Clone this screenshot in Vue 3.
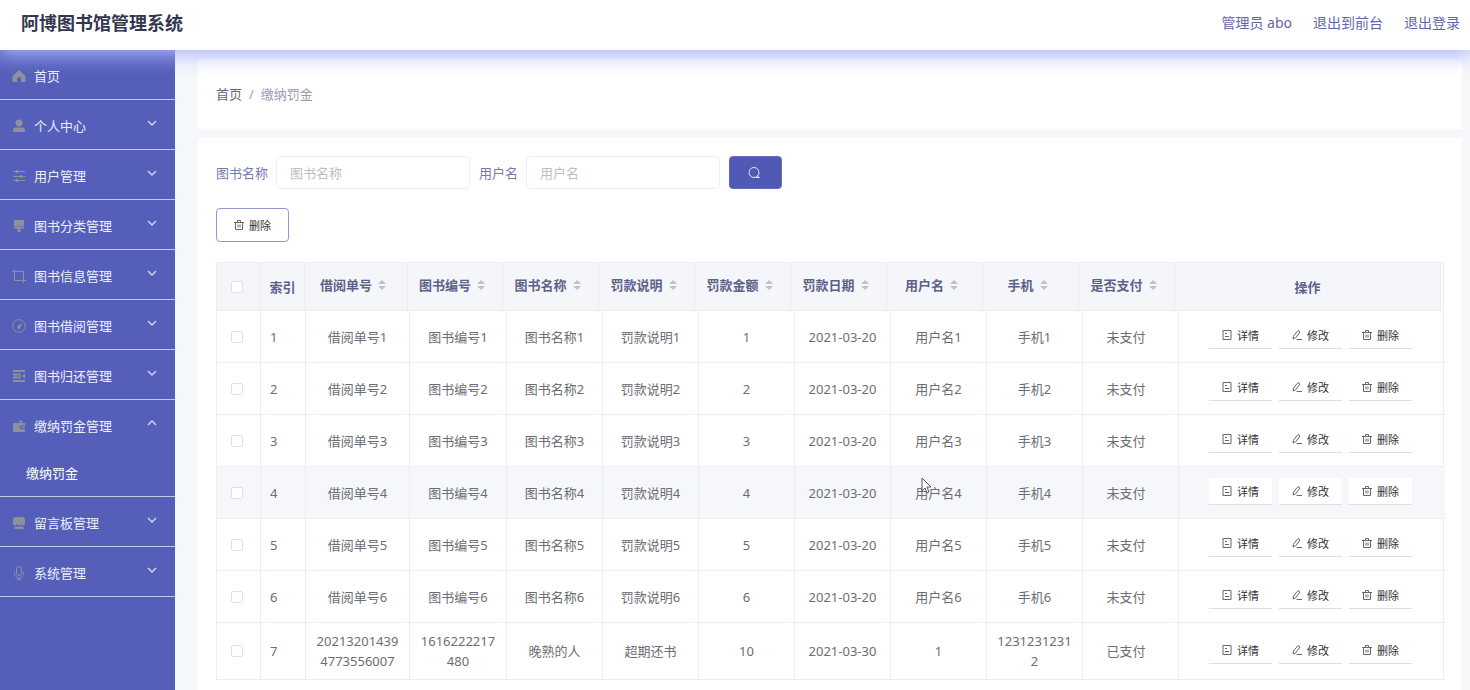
<template>
    <div class="layout">
        <header class="navbar">
            <h1 class="title">阿博图书馆管理系统</h1>
            <nav class="nav-links">
                <a href="#">管理员 abo</a>
                <a href="#">退出到前台</a>
                <a href="#">退出登录</a>
            </nav>
        </header>

        <div class="body">
            <aside class="sidebar">
                <ul class="menu">
                    <li v-for="item in menu" :key="item.label" class="menu-item">
                        <a href="#" class="menu-link">
                            <svg class="menu-icon" viewBox="0 0 14 14" v-html="menuIcons[item.icon]"></svg>
                            <span>{{ item.label }}</span>
                            <svg v-if="item.icon !== 'home'" class="arrow" :class="{ open: item.children }" viewBox="0 0 10 6">
                                <path d="M1 1l4 4 4-4" />
                            </svg>
                        </a>
                        <a v-for="child in item.children" :key="child" href="#" class="submenu-link">{{ child }}</a>
                    </li>
                </ul>
            </aside>

            <main class="main">
                <section class="panel breadcrumb">
                    <a href="#">首页</a>
                    <span class="slash">/</span>
                    <span class="current">缴纳罚金</span>
                </section>

                <section class="panel content">
                    <form class="search" @submit.prevent>
                        <label for="book">图书名称</label>
                        <input id="book" v-model="book" type="text" placeholder="图书名称">
                        <label for="user">用户名</label>
                        <input id="user" v-model="user" type="text" placeholder="用户名">
                        <button class="search-btn" type="submit" aria-label="搜索">
                            <svg viewBox="0 0 14 14">
                                <circle cx="7" cy="6.500" r="5" />
                                <path d="M9 11.500h3.500M10.500 9.500l1.500 2" />
                            </svg>
                        </button>
                    </form>

                    <button class="delete-btn" type="button">
                        <svg class="btn-icon" viewBox="0 0 10 10" v-html="btnIcons.trash"></svg>
                        <span>删除</span>
                    </button>

                    <div class="table-wrap">
                        <div class="table-head">
                            <table>
                                <colgroup>
                                    <col class="head-check"><col class="head-index"><col class="head-order"><col class="head-number">
                                    <col v-for="n in 7" :key="n" class="col-field">
                                    <col class="col-action">
                                </colgroup>
                                <thead>
                                    <tr>
                                        <th class="check"><input type="checkbox" aria-label="全选"></th>
                                        <th class="index">索引</th>
                                        <th v-for="name in columns" :key="name">
                                            <span class="sortable">
                                                {{ name }}
                                                <svg viewBox="0 0 8 10"><path d="M0 4l4-4 4 4zM0 6l4 4 4-4z" /></svg>
                                            </span>
                                        </th>
                                        <th>操作</th>
                                    </tr>
                                </thead>
                            </table>
                        </div>
                        <table>
                            <colgroup>
                                <col class="col-check"><col class="col-index"><col class="col-order"><col class="col-number">
                                <col v-for="n in 7" :key="n" class="col-field">
                                <col class="col-action">
                            </colgroup>
                            <tbody>
                                <tr v-for="(row, i) in rows" :key="i" :class="{ hovered: i === 3 }">
                                    <td class="check"><input type="checkbox" :aria-label="'选择' + (i + 1)"></td>
                                    <td class="index">{{ i + 1 }}</td>
                                    <td v-for="(cell, j) in row" :key="j" :class="{ status: j === 8 }">{{ cell }}</td>
                                    <td>
                                        <div class="actions">
                                            <button v-for="action in actions" :key="action.label" class="action-btn" type="button">
                                                <svg class="btn-icon" viewBox="0 0 10 10" v-html="btnIcons[action.icon]"></svg>
                                                <span>{{ action.label }}</span>
                                            </button>
                                        </div>
                                    </td>
                                </tr>
                            </tbody>
                        </table>
                    </div>
                </section>
            </main>
        </div>

        <svg class="cursor" viewBox="0 0 12 18">
            <path d="M1 1v13l3-3 2 5 2-1-2-5h4z" />
        </svg>
    </div>
</template>

<script setup>
import { ref } from 'vue';

const book = ref('');
const user = ref('');

const menu = [
    { label: '首页', icon: 'home' },
    { label: '个人中心', icon: 'user' },
    { label: '用户管理', icon: 'sliders' },
    { label: '图书分类管理', icon: 'brush' },
    { label: '图书信息管理', icon: 'crop' },
    { label: '图书借阅管理', icon: 'compass' },
    { label: '图书归还管理', icon: 'list' },
    { label: '缴纳罚金管理', icon: 'wallet', children: ['缴纳罚金'] },
    { label: '留言板管理', icon: 'shop' },
    { label: '系统管理', icon: 'mic' }
];

const menuIcons = {
    home: '<path fill="currentColor" d="M7 1l6.500 6v6H9v-3a2 2 0 0 0-4 0v3H.5V7z"/>',
    user: '<circle cx="7" cy="4" r="3.500" fill="currentColor"/><path fill="currentColor" d="M1 13v-2c0-1.500 1-2.500 2.500-2.500h7C12 8.500 13 9.500 13 11v2z"/>',
    sliders: '<path stroke="currentColor" d="M1 2.500h12M1 7.500h12M1 11.500h12"/><path stroke="currentColor" stroke-width="2" d="M5 1v3M9 6v3M5 10v3"/>',
    brush: '<path fill="currentColor" d="M2 1h10v6H2zM2 7.500h10v2H8.500V13h-3V9.500H2z"/>',
    crop: '<path stroke="currentColor" fill="none" d="M2.500 0v11.500H14M0 2.500h11.500V14"/>',
    compass: '<circle cx="7" cy="7" r="6.300" stroke="currentColor" fill="none"/><path fill="currentColor" d="M10 3.500L8.300 8.800a1.600 1.600 0 1 1-2.100-2z"/>',
    list: '<path stroke="currentColor" stroke-width="2" d="M1 2h12M1 5.500h8M1 8.500h8M1 12h12"/><path fill="currentColor" d="M13 4.500v5L10 7z"/>',
    wallet: '<path fill="currentColor" d="M1 4h12v2.500H9.500a1.700 1.700 0 0 0 0 3.500H13v3H1zM6 3.500l3-2.500 2 2.500zM9.500 7.500H13V9H9.500z"/>',
    shop: '<path fill="currentColor" d="M2.500 1h9L13 3v5.500l-2 1-2-1-2 1-2-1-2 1-2-1V3zM2.500 10.500h9V13h-9z"/>',
    mic: '<rect x="4.500" y="0.500" width="5" height="9" rx="2.500" stroke="currentColor" fill="none"/><path stroke="currentColor" fill="none" d="M2.500 6v1.500a4.500 4.500 0 0 0 9 0V6M7 12v2M5 13.500h4"/>'
};

const btnIcons = {
    trash: '<path d="M0 2.500h10M3.500 2.500v-2h3v2M1.500 2.500v7h7v-7M4 4.500v3M6 4.500v3"/>',
    detail: '<path d="M1 .5h8v9H1zM3 3.500h2M3 6.500h4"/>',
    edit: '<path d="M1 9l.5-3L6 .5l2 1.500L3.500 8zM4.500 9.500H10"/>'
};

const columns = ['借阅单号', '图书编号', '图书名称', '罚款说明', '罚款金额', '罚款日期', '用户名', '手机', '是否支付'];

const rows = [1, 2, 3, 4, 5, 6].map((n) => [
    `借阅单号${n}`, `图书编号${n}`, `图书名称${n}`, `罚款说明${n}`, n, '2021-03-20', `用户名${n}`, `手机${n}`, '未支付'
]);
rows.push(['202132014394773556007', '1616222217480', '晚熟的人', '超期还书', 10, '2021-03-30', '1', '12312312312', '已支付']);

const actions = [
    { label: '详情', icon: 'detail' },
    { label: '修改', icon: 'edit' },
    { label: '删除', icon: 'trash' }
];
</script>

<style>
body {
    margin: 0;
    background: #f6f7fb;
}
</style>

<style scoped>
.layout {
    position: relative;
    display: flex;
    flex-direction: column;
    min-height: 100vh;
    font-family: "Noto Sans", "Noto Sans CJK SC", sans-serif;
    font-size: 13px;
    line-height: 20px;
    color: #6c6e73;
}

.layout * {
    box-sizing: border-box;
}

a {
    color: inherit;
    text-decoration: none;
}

button,
input {
    font-family: inherit;
}

/* Top bar */
.navbar {
    position: relative;
    z-index: 1;
    display: flex;
    align-items: center;
    justify-content: space-between;
    height: 50px;
    padding: 0 10px 4px 21px;
    background: #fff;
    box-shadow: 0 3px 20px 2px #a9b5ff;
}

.title {
    margin: 0;
    font-size: 18px;
    font-weight: bold;
    color: #32364f;
}

.nav-links {
    display: flex;
    gap: 21px;
    font-size: 14px;
    color: #6166ac;
}

.body {
    display: flex;
    flex: 1;
}

/* Sidebar */
.sidebar {
    flex: none;
    width: 175px;
    background: #555fba;
}

.menu {
    margin: 0;
    padding: 0;
    list-style: none;
}

.menu-item {
    border-bottom: 1px solid #c6cae4;
    color: #eceefa;
}

.menu-link {
    display: flex;
    align-items: center;
    height: 49px;
    padding: 2px 18px 0 12px;
}

.menu-icon {
    width: 14px;
    height: 14px;
    margin-right: 8px;
    color: #8d919d;
    fill: none;
}

.arrow {
    width: 10px;
    height: 6px;
    margin: 0 0 6px auto;
    fill: none;
    stroke: #ccd1f2;
    stroke-width: 1.5;
}

.arrow.open {
    transform: rotate(180deg);
}

.submenu-link {
    display: flex;
    align-items: center;
    height: 47px;
    padding: 0 26px;
    color: #fff;
}

/* Main area */
.main {
    display: flex;
    flex: 1;
    flex-direction: column;
    gap: 9px;
    min-width: 0;
    padding: 9px 8px 0 23px;
}

.panel {
    background: #fff;
}

.breadcrumb {
    display: flex;
    align-items: center;
    height: 70px;
    padding: 0 18px;
}

.breadcrumb a {
    color: #65687a;
}

.slash {
    margin: 0 7px;
    color: #9da2b5;
}

.current {
    color: #979db3;
}

.content {
    flex: 1;
    padding: 18px 18px 10px;
}

.search {
    display: flex;
    align-items: center;
}

.search label {
    margin-right: 8px;
    color: #757aaf;
}

.search input {
    width: 194px;
    height: 33px;
    margin-right: 9px;
    padding: 0 13px;
    border: 1px solid #eeeff8;
    border-radius: 4px;
    background: #fff;
    color: #606266;
    font-size: 13px;
    outline: none;
}

.search input::placeholder {
    color: #bcbfc7;
}

.search-btn {
    display: flex;
    align-items: center;
    justify-content: center;
    width: 53px;
    height: 33px;
    padding: 0 4px 0 0;
    border: 1px solid #626bc0;
    border-radius: 4px;
    background: #505ab5;
}

.search-btn svg {
    width: 14px;
    height: 14px;
    fill: none;
    stroke: #e3e6fa;
}

.delete-btn {
    display: flex;
    align-items: center;
    justify-content: center;
    width: 73px;
    height: 34px;
    margin: 19px 0 20px;
    padding: 0;
    border: 1px solid #9398cb;
    border-radius: 4px;
    background: #fff;
    color: #333;
    font-size: 11px;
}

.btn-icon {
    width: 10px;
    height: 10px;
    margin-right: 5px;
    fill: none;
    stroke: #666;
}

/* Table */
.table-wrap {
    border: 1px solid #ebedf4;
    border-width: 1px 1px 0;
}

.table-head {
    padding-right: 4px;
}

table {
    width: 100%;
    table-layout: fixed;
    border-collapse: separate;
    border-spacing: 0;
}

.head-check,
.col-check,
.head-index {
    width: 44px;
}

.col-index {
    width: 45px;
}

.head-order {
    width: 103px;
}

.col-order {
    width: 104px;
}

.head-number {
    width: 95px;
}

.col-number {
    width: 97px;
}

.col-field {
    width: 96px;
}

.col-action {
    width: 266px;
}

th,
td {
    padding: 8px 9px;
    border-right: 1px solid #ebedf4;
    border-bottom: 1px solid #ebedf4;
    text-align: center;
    word-break: break-all;
}

th {
    height: 48px;
    padding: 0 4px;
    background: #f5f6fa;
    color: #5d6288;
    font-weight: bold;
}

td {
    height: 52px;
}

tbody td:last-child {
    border-right: 0;
}

td.index {
    text-align: left;
}

td.status {
    padding-right: 18px;
}

.check {
    padding: 0 4px 0 0;
}

.check input {
    display: block;
    width: 12px;
    height: 12px;
    margin: 0 auto;
    border: 1px solid #dfe1e8;
    border-radius: 2px;
    background: #fff;
    appearance: none;
}

.hovered td {
    background: #f5f7fb;
}

.sortable {
    display: inline-flex;
    align-items: center;
    gap: 6px;
    padding: 0 6px 3px 0;
}

.sortable svg {
    width: 8px;
    height: 10px;
    fill: #c0c2ca;
}

.actions {
    display: flex;
    justify-content: center;
    gap: 7px;
    padding: 0 3px 2px 0;
}

.action-btn {
    display: flex;
    align-items: center;
    justify-content: center;
    width: 63px;
    height: 27px;
    padding: 0;
    border: 0;
    border-bottom: 1px solid #dddfe3;
    background: #fff;
    color: #333;
    font-size: 11px;
}

/* Pointer over the hovered row */
.cursor {
    position: absolute;
    top: 477px;
    left: 921px;
    width: 12px;
    height: 18px;
    fill: #fff;
    stroke: #55575f;
}
</style>
